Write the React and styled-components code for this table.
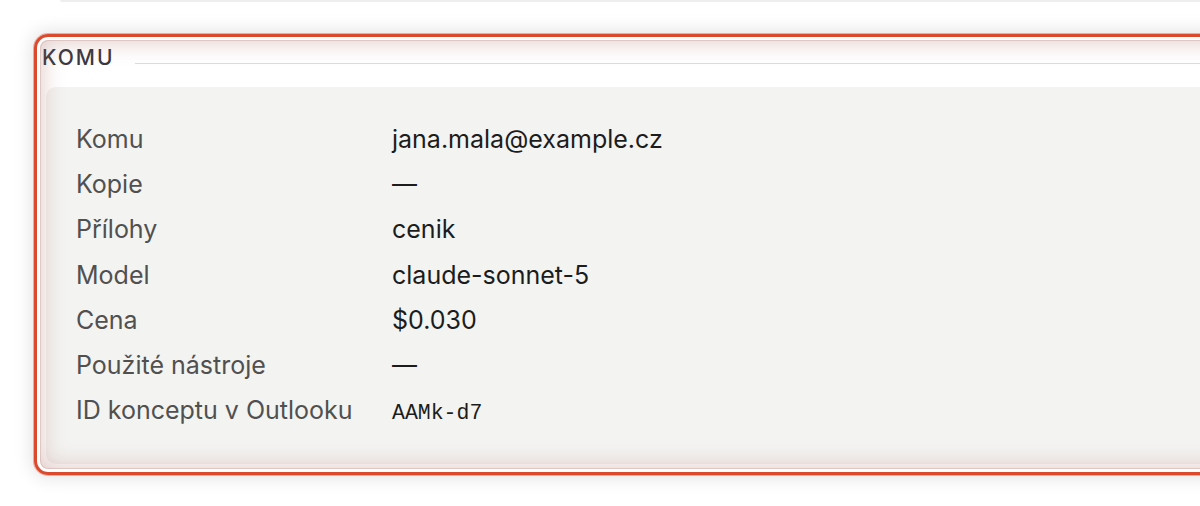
import React from "react";
import styled, { createGlobalStyle } from "styled-components";

const Global = createGlobalStyle`
  html, body { margin: 0; padding: 0; background: #ffffff; }
  body { overflow: hidden; font-family: Inter, "Noto Sans", sans-serif; }
`;

const Page = styled.div`
  width: 1200px;
  height: 506px;
  overflow: hidden;
  display: flex;
  flex-direction: column;
`;

const PrevCardEdge = styled.div`
  height: 2px;
  margin-left: 60px;
  background: #eeeeee;
  border-bottom-left-radius: 2px;
`;

const Section = styled.section`
  position: relative;
  margin: 38px 0 0 40px;
  width: 1200px;
  padding-bottom: 5px;
  display: flex;
  flex-direction: column;
`;

const Highlight = styled.div`
  position: absolute;
  inset: -6px;
  border: 3px solid #dc4a2d;
  border-radius: 14px;
  pointer-events: none;
  box-shadow:
    0 0 0 1px rgba(220, 74, 45, 0.4),
    0 0 18px 3px rgba(0, 0, 0, 0.11),
    inset 0 0 0 3px #ffffff,
    inset 0 0 0 4px rgba(190, 140, 130, 0.3),
    inset 0 0 22px 5px rgba(165, 95, 85, 0.33);
`;

const Header = styled.div`
  display: flex;
  align-items: flex-start;
  height: 47px;
  padding-left: 2px;
`;

const Title = styled.h3`
  margin: 5px 0 0 0;
  font-size: 21px;
  line-height: 25px;
  font-weight: 500;
  letter-spacing: 2px;
  color: #3b3842;
  text-transform: uppercase;
`;

const Rule = styled.div`
  flex: 1;
  height: 1px;
  margin: 23px 0 0 20px;
  background: #dcdcdc;
`;

const Card = styled.div`
  margin-left: 6px;
  background: #f3f3f1;
  border-radius: 10px;
  padding: 30px 30px 31px 30px;
`;

const Grid = styled.dl`
  margin: 0;
  display: grid;
  grid-template-columns: 316px 1fr;
  grid-auto-rows: 45.2px;
  align-items: baseline;
  font-size: 25px;
  line-height: 45px;
`;

const Label = styled.dt`
  margin: 0;
  color: #505050;
  white-space: nowrap;
`;

const Value = styled.dd`
  margin: 0;
  color: #1c1c1c;
  white-space: nowrap;
  font-family: ${(p) => (p.$mono ? '"Liberation Mono", "DejaVu Sans Mono", monospace' : 'Inter, "Noto Sans", sans-serif')};
  font-size: ${(p) => (p.$mono ? "21.5px" : "25px")};
`;

const rows = [
  ["Komu", "jana.mala@example.cz"],
  ["Kopie", "—"],
  ["Přílohy", "cenik"],
  ["Model", "claude-sonnet-5"],
  ["Cena", "$0.030"],
  ["Použité nástroje", "—"],
  ["ID konceptu v Outlooku", "AAMk-d7", true],
];

export default function App() {
  return (
    <Page>
      <Global />
      <PrevCardEdge />
      <Section>
        <Header>
          <Title>Komu</Title>
          <Rule />
        </Header>
        <Card>
          <Grid>
            {rows.map(([l, v, mono]) => (
              <React.Fragment key={l}>
                <Label>{l}</Label>
                <Value $mono={mono}>{v}</Value>
              </React.Fragment>
            ))}
          </Grid>
        </Card>
        <Highlight />
      </Section>
    </Page>
  );
}
